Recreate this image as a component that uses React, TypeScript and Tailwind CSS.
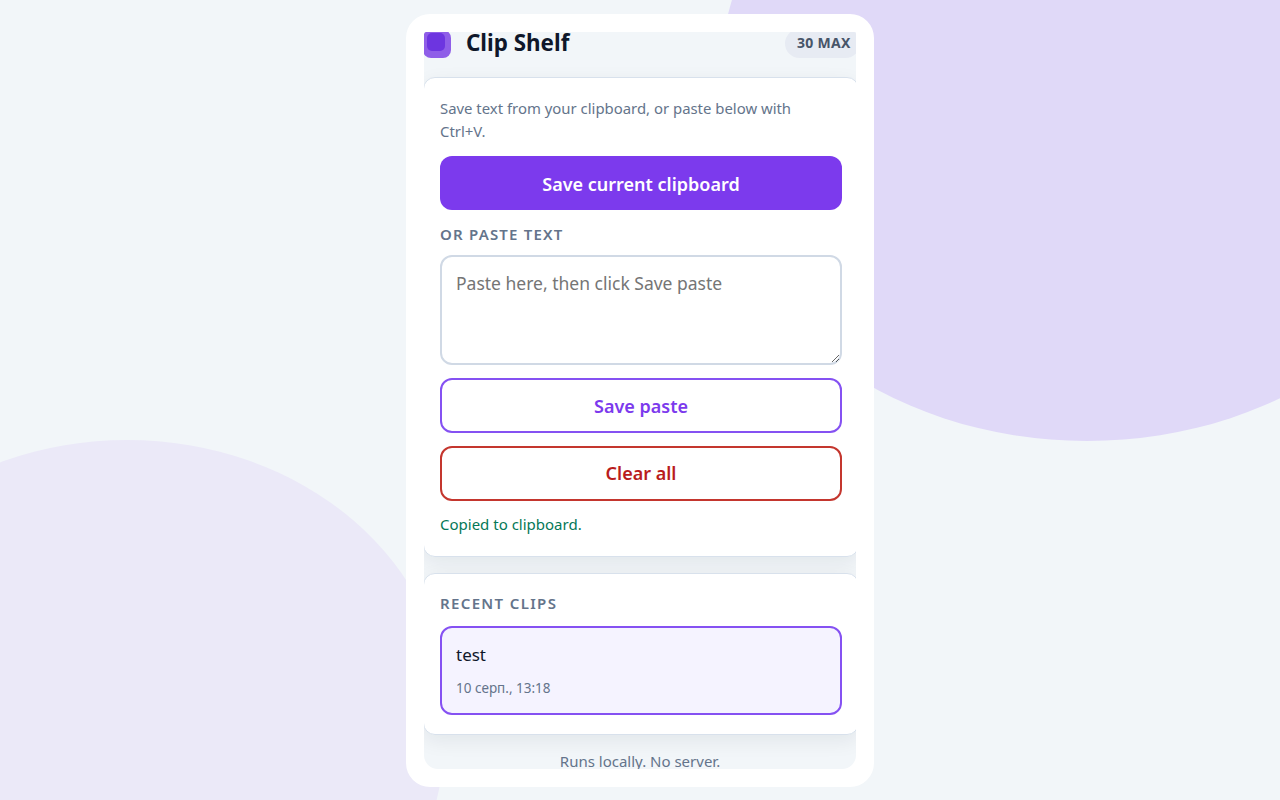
const font = { fontFamily: '"Noto Sans", "Open Sans", sans-serif' };

function Card({ children, className }: { children: React.ReactNode; className?: string }) {
  return (
    <section
      className={`-mx-px bg-white border border-[#d8e1ec] rounded-[12px] px-[16px] shadow-[0_6px_20px_rgba(15,23,42,0.07)] ${className ?? ''}`}
    >
      {children}
    </section>
  );
}

export default function App() {
  return (
    <div
      className="relative w-[1280px] h-[800px] overflow-hidden bg-[#f2f6f9] flex justify-center items-start"
      style={font}
    >
      <div className="absolute left-[712px] top-[-295px] w-[750px] h-[736px] rounded-[375px/435px_435px_300px_300px] bg-[#e0d9f8]" />
      <div className="absolute left-[-193px] top-[440px] w-[640px] h-[614px] rounded-[320px/274px_274px_340px_340px] bg-[#ebe9f8]" />

      <div className="relative mt-[14px] w-[468px] h-[773px] bg-white rounded-[24px] p-[18px]">
        <div className="h-full w-full overflow-hidden bg-[#f2f6f9] rounded-b-[14px]">
          <div className="w-[434px] -mt-[3px]">
            <header className="flex items-start h-[29px] mb-[19px]">
              <div className="mt-px w-[28px] h-[28px] -ml-px rounded-[8px] bg-[#8f5ee8] pl-[4px] pt-[3px] shrink-0">
                <div className="w-[18px] h-[18px] rounded-[5px] bg-[#6d35e0]" />
              </div>
              <h1 className="ml-[15px] text-[22.4px] leading-[28px] font-bold text-[#0f172a]">Clip Shelf</h1>
              <span className="ml-auto w-[75px] -mr-[2px] h-[29px] pl-[12px] pb-[3px] flex items-center rounded-full bg-[#e7ebf3] text-[14px] font-bold tracking-[0.3px] text-[#475569]">
                30 MAX
              </span>
            </header>

            <Card className="pt-[19px] pb-[20px] mb-[16px]">
              <p className="text-[14.9px] leading-[23px] text-[#64748b]">
                Save text from your clipboard, or paste below with
                <br />
                Ctrl+V.
              </p>
              <button className="mt-[13px] block w-full h-[54px] pt-[3px] rounded-[12px] bg-[#7c3aed] text-white text-[18px] font-semibold">
                Save current clipboard
              </button>
              <div className="mt-[14px] text-[15px] leading-[20px] font-semibold tracking-[1.2px] text-[#64748b]">
                OR PASTE TEXT
              </div>
              <textarea
                readOnly
                placeholder="Paste here, then click Save paste"
                className="block mt-[11px] w-full h-[110px] rounded-[12px] border-2 border-[#d0d9e5] bg-white px-[14px] py-[14px] text-[17.5px] leading-[24px] placeholder:text-[#757575] outline-none"
              />
              <button className="mt-[13px] block w-full h-[55px] pt-[1px] rounded-[12px] border-2 border-[#8551f2] bg-white text-[#7c3aed] text-[18px] font-semibold">
                Save paste
              </button>
              <button className="mt-[13px] block w-full h-[55px] rounded-[12px] border-2 border-[#c4362e] bg-white text-[#b91c1c] text-[18px] font-semibold">
                Clear all
              </button>
              <p className="mt-[12px] text-[15px] leading-[23px] text-[#047857]">Copied to clipboard.</p>
            </Card>

            <Card className="pt-[19px] pb-[19px] mb-[15px]">
              <div className="text-[15px] leading-[20px] font-semibold tracking-[1.35px] text-[#64748b]">RECENT CLIPS</div>
              <div className="mt-[13px] h-[89px] rounded-[12px] border-2 border-[#8551f2] bg-[#f5f3ff] px-[14px] pt-[15px]">
                <div className="text-[17px] leading-[24px] text-[#0f172a]">test</div>
                <div className="mt-[12px] text-[13.5px] leading-[18px] text-[#64748b]">10 серп., 13:18</div>
              </div>
            </Card>

            <p className="text-center pr-[2px] text-[15px] leading-[22px] text-[#64748b]">Runs locally. No server.</p>
          </div>
        </div>
      </div>
    </div>
  );
}
